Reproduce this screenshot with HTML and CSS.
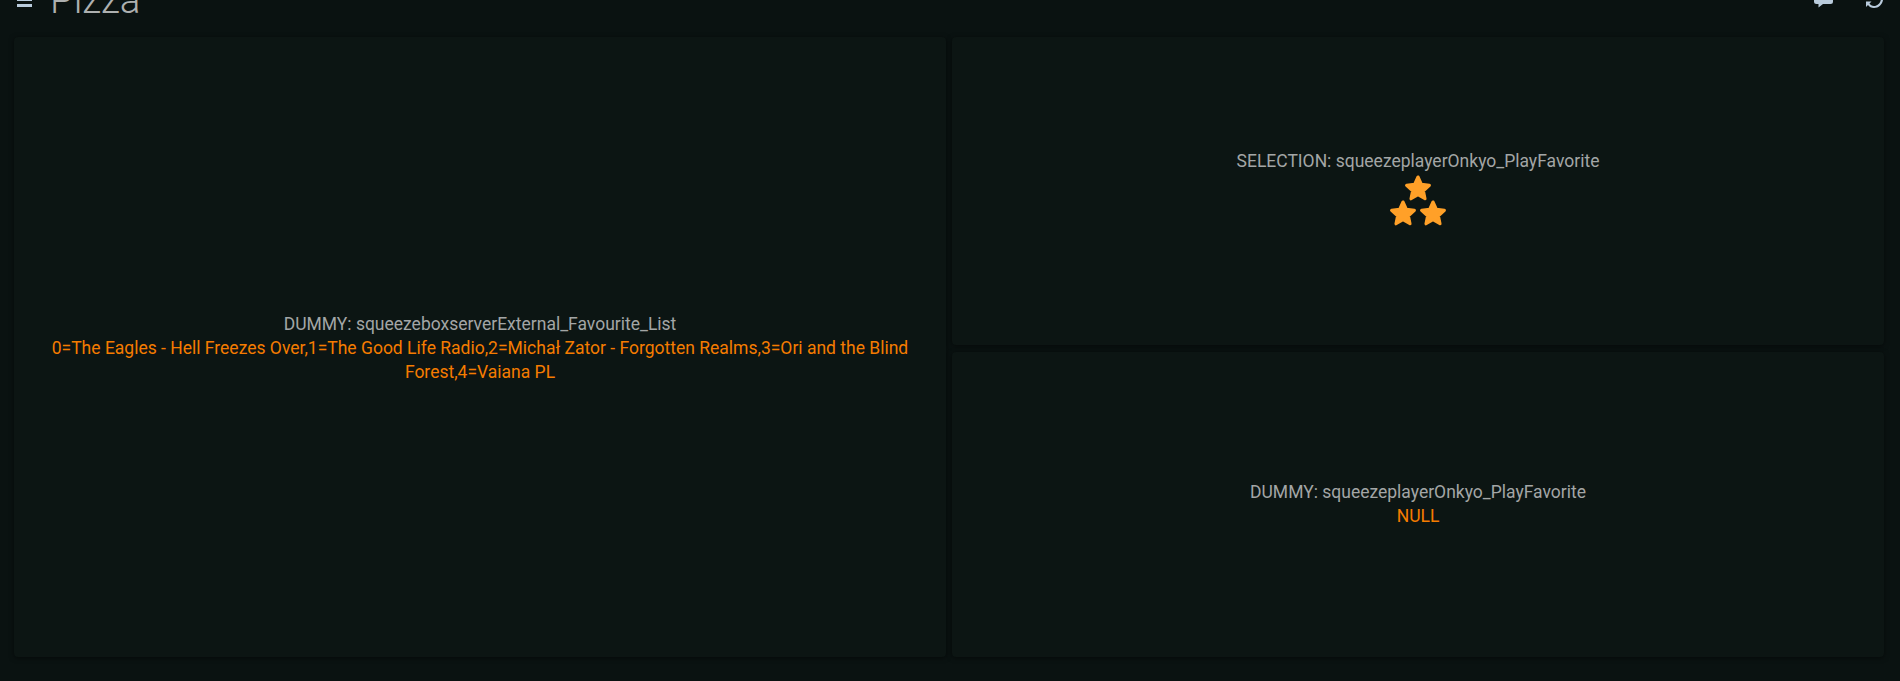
FILE: index.html
```html
<!DOCTYPE html>
<html lang="en">
<head>
<meta charset="utf-8">
<title>Pizza</title>
<link rel="stylesheet" href="styles.css">
</head>
<body>
<header class="topbar">
  <div class="title-group">
    <svg class="menu-icon" viewBox="0 0 15 8" aria-hidden="true"><path d="M0 0h15v1H0zM0 4h15v3H0z"/></svg>
    <h1 class="title">Pizza</h1>
  </div>
  <div class="actions">
    <svg class="chat-icon" viewBox="0 0 19 8" aria-hidden="true"><path d="M0 0h19v1.500a2.500 2.500 0 0 1-2.500 2.500H9L4.500 7.500V4H2.500A2.500 2.500 0 0 1 0 1.500z"/></svg>
    <svg class="refresh-icon" viewBox="0 0 17 8" aria-hidden="true"><path d="M0 1.500h5.500L3.500 3.500C4.400 5 6 6 8 6c3.300 0 6-2.400 6.800-6H17c-.8 4.700-4.300 8-9 8-2.600 0-4.800-1.200-6-3L0 7z"/></svg>
  </div>
</header>
<main class="grid">
  <section class="panel panel-tall">
    <div class="label">DUMMY: squeezeboxserverExternal_Favourite_List</div>
    <div class="value">0=The Eagles - Hell Freezes Over,1=The Good Life Radio,2=Michał Zator - Forgotten Realms,3=Ori and the Blind Forest,4=Vaiana PL</div>
  </section>
  <section class="panel panel-selection">
    <div class="label">SELECTION: squeezeplayerOnkyo_PlayFavorite</div>
    <div class="stars" aria-hidden="true">
      <svg class="star" viewBox="0 0 24 24"><path d="M12 3.200l2.700 5.900 6.400.7-4.800 4.400 1.300 6.400-5.600-3.200-5.600 3.200 1.300-6.400-4.800-4.400 6.400-.7z"/></svg>
      <div class="star-row">
        <svg class="star" viewBox="0 0 24 24"><path d="M12 3.200l2.700 5.900 6.400.7-4.800 4.400 1.300 6.400-5.600-3.200-5.600 3.200 1.300-6.400-4.800-4.400 6.400-.7z"/></svg>
        <svg class="star" viewBox="0 0 24 24"><path d="M12 3.200l2.700 5.900 6.400.7-4.800 4.400 1.300 6.400-5.600-3.200-5.600 3.200 1.300-6.400-4.800-4.400 6.400-.7z"/></svg>
      </div>
    </div>
  </section>
  <section class="panel panel-null">
    <div class="label">DUMMY: squeezeplayerOnkyo_PlayFavorite</div>
    <div class="value">NULL</div>
  </section>
</main>
</body>
</html>
```
FILE: styles.css
```css
* { box-sizing: border-box; }
html, body { height: 100%; }
body {
  margin: 0;
  background: #0a1211;
  font-family: Roboto, "Liberation Sans", sans-serif;
  font-size: 17.5px;
  line-height: 24px;
  overflow: hidden;
}
.topbar {
  height: 37px;
  display: flex;
  justify-content: space-between;
  overflow: hidden;
  padding: 0 17px 0 17px;
}
.title-group { display: flex; align-items: flex-start; gap: 18px; }
.menu-icon { width: 15px; height: 8px; fill: #b9cbdc; flex: none; }
.title {
  margin: -20px 0 0;
  font-size: 38.500px;
  line-height: 40px;
  font-weight: 300;
  color: #adb0b0;
}
.actions { display: flex; align-items: flex-start; gap: 33px; }
.chat-icon { width: 19px; height: 8px; fill: #b9cbdc; }
.refresh-icon { width: 17px; height: 8px; fill: #b9cbdc; }
.grid {
  display: grid;
  grid-template-columns: 932px 932px;
  grid-template-rows: 308px 305px;
  column-gap: 6px;
  row-gap: 7px;
  padding-left: 14px;
}
.panel {
  background: #0c1513;
  border-radius: 4px;
  box-shadow: 0 1px 5px rgba(0, 0, 0, .5);
  display: flex;
  flex-direction: column;
  align-items: center;
  justify-content: center;
  text-align: center;
  padding: 0 24px;
}
.panel-tall { grid-row: 1 / span 2; padding-top: 2px; }
.panel-selection { padding-bottom: 6px; }
.panel-null { padding-bottom: 2px; }
.label { color: #a3a6a6; }
.value { color: #f57c00; }
.stars { display: flex; flex-direction: column; align-items: center; }
.star {
  display: block;
  width: 30px;
  height: 30px;
  fill: #ffa028;
  stroke: #ffa028;
  stroke-width: 2.500;
  stroke-linejoin: round;
}
.star-row { display: flex; margin-top: -5px; }
```
